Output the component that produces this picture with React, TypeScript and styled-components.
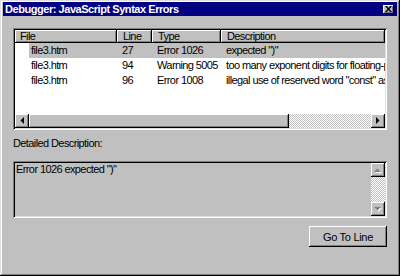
import React from "react";
import styled, { createGlobalStyle } from "styled-components";

const face = "#c0c0c0";

const GlobalStyle = createGlobalStyle`
  html, body {
    margin: 0;
    padding: 0;
    background: ${face};
  }
  body {
    font-family: "Liberation Sans", Arial, sans-serif;
    font-size: 11px;
    letter-spacing: -0.6px;
    color: #000;
  }
`;

const raised = `
  box-shadow: inset -1px -1px #000, inset 1px 1px #fff, inset -2px -2px #808080,
    inset 2px 2px ${face};
`;

const sunken = `
  box-shadow: inset 1px 1px #808080, inset -1px -1px #fff, inset 2px 2px #000,
    inset -2px -2px #dfdfdf;
`;

const dither = `
  background: repeating-conic-gradient(${face} 0% 25%, #ffffff 0% 50%) 0 0 / 2px 2px;
`;

const Window = styled.div`
  width: 400px;
  height: 276px;
  box-sizing: border-box;
  padding: 2px 3px 3px 3px;
  background: ${face};
  box-shadow: inset -1px -1px #000, inset 1px 1px #dfdfdf, inset -2px -2px #808080,
    inset 2px 2px #fff;
  display: flex;
  flex-direction: column;
`;

const TitleBar = styled.div`
  height: 14px;
  background: #000080;
  color: #fff;
  display: flex;
  align-items: center;
  padding-left: 2px;
`;

const Title = styled.span`
  flex: 1;
  font-weight: bold;
  font-size: 11px;
  letter-spacing: -0.45px;
  line-height: 14px;
  white-space: nowrap;
`;

const CloseButton = styled.div`
  width: 11px;
  height: 9px;
  margin-right: 3px;
  background: ${face};
  box-shadow: inset -1px -1px #000, inset 1px 1px #fff, inset -2px -2px #808080;
  display: flex;
  align-items: center;
  justify-content: center;
`;

const Body = styled.div`
  flex: 1;
  display: flex;
  flex-direction: column;
  padding: 12px 10px 0 10px;
`;

const ListView = styled.div`
  height: 102px;
  box-sizing: border-box;
  padding: 2px;
  background: #fff;
  ${sunken}
  display: flex;
  flex-direction: column;
  overflow: hidden;
`;

const Viewport = styled.div`
  flex: 1;
  overflow: hidden;
  white-space: nowrap;
`;

const HeaderRow = styled.div`
  display: grid;
  grid-template-columns: 102px 35px 69px 164px;
  height: 13px;
`;

const HeaderCell = styled.div<{ $pad: number }>`
  background: ${face};
  ${raised}
  padding-left: ${(p) => p.$pad}px;
  line-height: 13px;
  overflow: hidden;
`;

const Row = styled.div<{ $selected?: boolean }>`
  display: grid;
  grid-template-columns: 88px 35px 69px 164px;
  margin-left: 14px;
  height: 15px;
  background: ${(p) => (p.$selected ? face : "#fff")};
`;

const Cell = styled.div<{ $pad: number }>`
  padding-left: ${(p) => p.$pad}px;
  line-height: 15px;
  overflow: hidden;
  white-space: nowrap;
`;

const HScroll = styled.div`
  height: 14px;
  display: flex;
`;

const VScroll = styled.div`
  width: 14px;
  display: flex;
  flex-direction: column;
`;

const ScrollButton = styled.div`
  width: 14px;
  height: 14px;
  flex: none;
  background: ${face};
  ${raised}
  display: flex;
  align-items: center;
  justify-content: center;
`;

const Thumb = styled.div`
  width: 260px;
  flex: none;
  background: ${face};
  ${raised}
`;

const Track = styled.div`
  flex: 1;
  ${dither}
`;

const Label = styled.div`
  margin-top: 7px;
  line-height: 13px;
`;

const DetailBox = styled.div`
  margin-top: 11px;
  height: 57px;
  box-sizing: border-box;
  padding: 2px;
  background: ${face};
  ${sunken}
  display: flex;
`;

const DetailText = styled.div`
  flex: 1;
  padding-left: 1px;
  line-height: 13px;
`;

const Footer = styled.div`
  margin-top: 8px;
  display: flex;
  justify-content: flex-end;
`;

const PushButton = styled.button`
  width: 78px;
  height: 21px;
  padding: 0;
  border: none;
  background: ${face};
  ${raised}
  font-family: inherit;
  font-size: 11px;
  letter-spacing: -0.3px;
  color: #000;
`;

const columns = [
  { title: "File", pad: 5 },
  { title: "Line", pad: 6 },
  { title: "Type", pad: 6 },
  { title: "Description", pad: 6 },
];

const errors = [
  { file: "file3.htm", line: "27", type: "Error 1026", desc: 'expected ")"' },
  {
    file: "file3.htm",
    line: "94",
    type: "Warning 5005",
    desc: "too many exponent digits for floating-point number",
  },
  {
    file: "file3.htm",
    line: "96",
    type: "Error 1008",
    desc: 'illegal use of reserved word "const" as an identifier',
  },
];

function Arrow({ dir, disabled }: { dir: "left" | "right" | "up" | "down"; disabled?: boolean }) {
  const pts = {
    left: "5,0 5,7 1.5,3.5",
    right: "1,0 1,7 4.5,3.5",
    up: "0,5 7,5 3.5,1.5",
    down: "0,1 7,1 3.5,4.5",
  }[dir];
  const horiz = dir === "left" || dir === "right";
  const w = horiz ? 6 : 8;
  const h = horiz ? 8 : 6;
  return (
    <svg width={w} height={h} viewBox={`0 0 ${w} ${h}`}>
      {disabled && <polygon points={pts} fill="#fff" transform="translate(1 1)" />}
      <polygon points={pts} fill={disabled ? "#808080" : "#000"} />
    </svg>
  );
}

export default function App() {
  return (
    <>
      <GlobalStyle />
      <Window>
        <TitleBar>
          <Title>Debugger: JavaScript Syntax Errors</Title>
          <CloseButton>
            <svg width="7" height="6" viewBox="0 0 7 6">
              <path d="M0 0h2l1.5 2 1.5-2h2L4.5 3 7 6H5L3.5 4 2 6H0l2.5-3z" fill="#000" />
            </svg>
          </CloseButton>
        </TitleBar>
        <Body>
          <ListView>
            <Viewport>
              <HeaderRow>
                {columns.map((c) => (
                  <HeaderCell key={c.title} $pad={c.pad}>
                    {c.title}
                  </HeaderCell>
                ))}
              </HeaderRow>
              {errors.map((e, i) => (
                <Row key={e.line} $selected={i === 0}>
                  <Cell $pad={2}>{e.file}</Cell>
                  <Cell $pad={5}>{e.line}</Cell>
                  <Cell $pad={5}>{e.type}</Cell>
                  <Cell $pad={5}>{e.desc}</Cell>
                </Row>
              ))}
            </Viewport>
            <HScroll>
              <ScrollButton>
                <Arrow dir="left" />
              </ScrollButton>
              <Thumb />
              <Track />
              <ScrollButton>
                <Arrow dir="right" />
              </ScrollButton>
            </HScroll>
          </ListView>
          <Label>Detailed Description:</Label>
          <DetailBox>
            <DetailText>Error 1026 expected ")"</DetailText>
            <VScroll>
              <ScrollButton>
                <Arrow dir="up" disabled />
              </ScrollButton>
              <Track />
              <ScrollButton>
                <Arrow dir="down" disabled />
              </ScrollButton>
            </VScroll>
          </DetailBox>
          <Footer>
            <PushButton>Go To Line</PushButton>
          </Footer>
        </Body>
      </Window>
    </>
  );
}
